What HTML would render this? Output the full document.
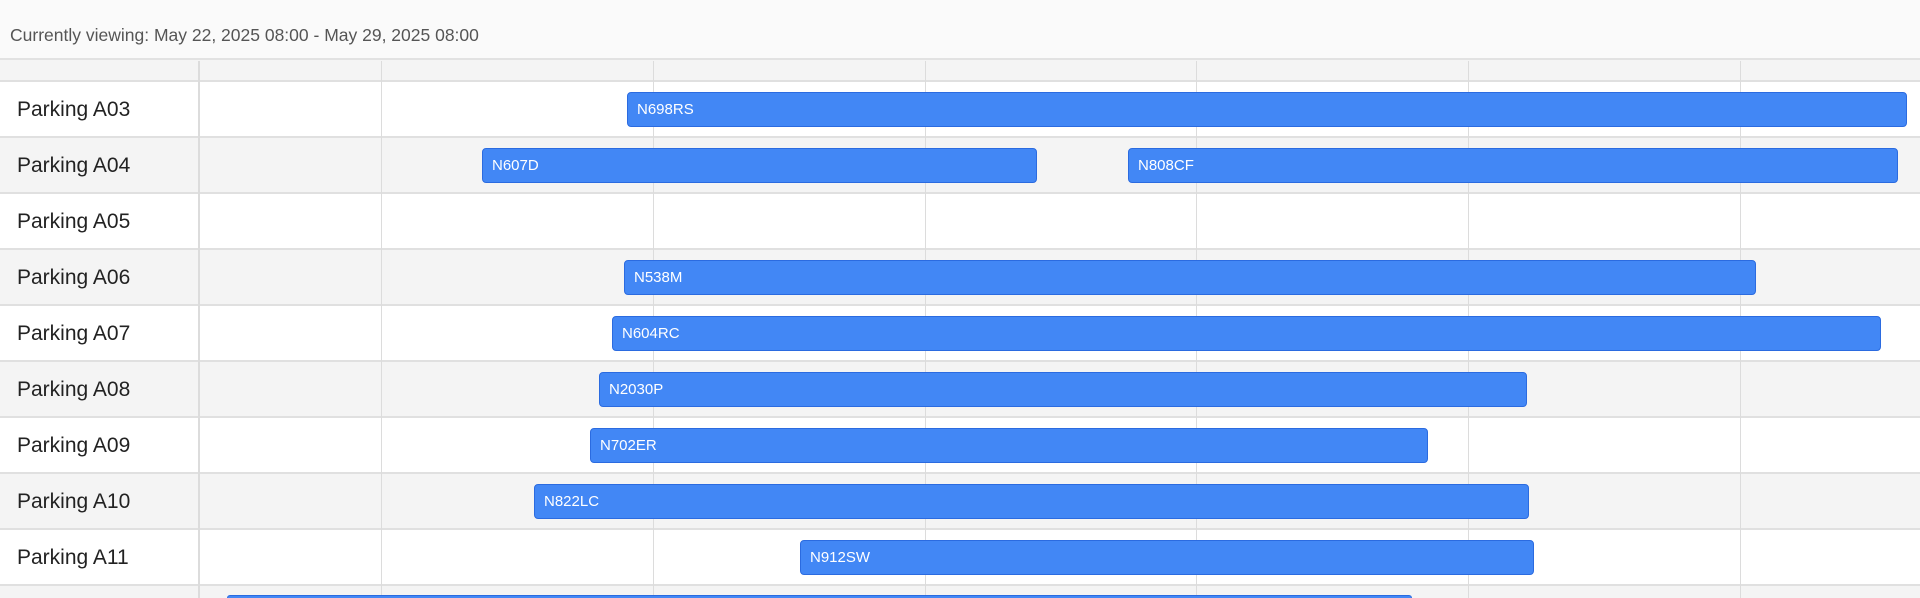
<!DOCTYPE html>
<html style="width:1920px;height:598px;overflow:hidden"><head><style>
body{margin:0;width:1920px;height:598px;overflow:hidden;background:#fff;font-family:"Liberation Sans",sans-serif;position:relative}
.hdr{position:absolute;left:0;top:0;width:1920px;height:60px;background:#fafafa;border-bottom:2px solid #e2e2e2;box-sizing:border-box}
.hdr span{position:absolute;left:10px;top:25px;font-size:17.5px;color:#555}
.row{position:absolute;left:0;width:1920px;height:56px;border-bottom:2px solid #e0e0e0;box-sizing:border-box}
.g{background:#f4f4f4}
.lbl{position:absolute;left:17px;top:16px;font-size:21px;color:#222}
.v{position:absolute;top:61px;height:537px;width:1px;background:#dcdcdc}
.bar{position:absolute;height:35px;background:#4287f5;border:1px solid #2b6be0;border-radius:4px;box-sizing:border-box;color:#fff;font-size:15px;line-height:34px;padding-left:9px}
</style></head><body>
<div class="row g" style="top:60px;height:22px"></div>
<div class="row" style="top:82px"><span class="lbl">Parking A03</span></div>
<div class="row g" style="top:138px"><span class="lbl">Parking A04</span></div>
<div class="row" style="top:194px"><span class="lbl">Parking A05</span></div>
<div class="row g" style="top:250px"><span class="lbl">Parking A06</span></div>
<div class="row" style="top:306px"><span class="lbl">Parking A07</span></div>
<div class="row g" style="top:362px"><span class="lbl">Parking A08</span></div>
<div class="row" style="top:418px"><span class="lbl">Parking A09</span></div>
<div class="row g" style="top:474px"><span class="lbl">Parking A10</span></div>
<div class="row" style="top:530px"><span class="lbl">Parking A11</span></div>
<div class="row g" style="top:586px;height:12px;border:0"></div>
<div class="v" style="left:198px;width:2px"></div>
<div class="v" style="left:381px"></div>
<div class="v" style="left:653px"></div>
<div class="v" style="left:925px"></div>
<div class="v" style="left:1196px"></div>
<div class="v" style="left:1468px"></div>
<div class="v" style="left:1740px"></div>
<div class="bar" style="top:92px;left:627px;width:1280px">N698RS</div>
<div class="bar" style="top:148px;left:482px;width:555px">N607D</div>
<div class="bar" style="top:148px;left:1128px;width:770px">N808CF</div>
<div class="bar" style="top:260px;left:624px;width:1132px">N538M</div>
<div class="bar" style="top:316px;left:612px;width:1269px">N604RC</div>
<div class="bar" style="top:372px;left:599px;width:928px">N2030P</div>
<div class="bar" style="top:428px;left:590px;width:838px">N702ER</div>
<div class="bar" style="top:484px;left:534px;width:995px">N822LC</div>
<div class="bar" style="top:540px;left:800px;width:734px">N912SW</div>
<div class="bar" style="top:595px;left:227px;width:1185px;height:3px;border-bottom:0;border-radius:4px 4px 0 0"></div>
<div class="hdr"><span>Currently viewing: May 22, 2025 08:00 - May 29, 2025 08:00</span></div>
</body></html>
